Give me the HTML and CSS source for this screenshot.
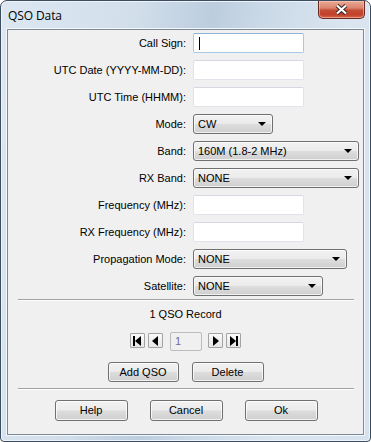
FILE: index.html
```html
<!DOCTYPE html>
<html>
<head>
<meta charset="utf-8">
<link rel="stylesheet" href="styles.css">
</head>
<body>
<div class="window">
  <div class="titlebar">
    <span class="title">QSO Data</span>
    <div class="close">
      <svg width="13" height="11" viewBox="0 0 13 11">
        <path d="M2 1.5 L11 9.5 M11 1.5 L2 9.5" stroke="#3b2420" stroke-width="4.2" fill="none"/>
        <path d="M2 1.5 L11 9.5 M11 1.5 L2 9.5" stroke="#ffffff" stroke-width="2.2" fill="none"/>
      </svg>
    </div>
  </div>
  <div class="client">
    <div class="form">
      <label>Call Sign:</label>
      <div class="input focused w111"><span class="caret"></span></div>
      <label>UTC Date (YYYY-MM-DD):</label>
      <div class="input w111"></div>
      <label>UTC Time (HHMM):</label>
      <div class="input w111"></div>
      <label>Mode:</label>
      <div class="select w80"><span>CW</span><i class="arrow"></i></div>
      <label>Band:</label>
      <div class="select w166"><span>160M (1.8-2 MHz)</span><i class="arrow"></i></div>
      <label>RX Band:</label>
      <div class="select w166"><span>NONE</span><i class="arrow"></i></div>
      <label>Frequency (MHz):</label>
      <div class="input w111"></div>
      <label>RX Frequency (MHz):</label>
      <div class="input w111"></div>
      <label>Propagation Mode:</label>
      <div class="select w154"><span>NONE</span><i class="arrow"></i></div>
      <label>Satellite:</label>
      <div class="select w130"><span>NONE</span><i class="arrow"></i></div>
    </div>
    <div class="sep"></div>
    <div class="record">1 QSO Record</div>
    <div class="nav">
      <div class="navbtn"><svg width="11" height="10" viewBox="0 0 11 10"><rect x="1" y="0" width="2" height="10" fill="#000"/><path d="M3 5 L9 0 L9 10 Z" fill="#000"/></svg></div>
      <div class="navbtn"><svg width="11" height="10" viewBox="0 0 11 10"><path d="M2 5 L8 0 L8 10 Z" fill="#000"/></svg></div>
      <div class="numbox">1</div>
      <div class="navbtn"><svg width="11" height="10" viewBox="0 0 11 10"><path d="M9 5 L3 0 L3 10 Z" fill="#000"/></svg></div>
      <div class="navbtn"><svg width="11" height="10" viewBox="0 0 11 10"><rect x="8" y="0" width="2" height="10" fill="#000"/><path d="M8 5 L2 0 L2 10 Z" fill="#000"/></svg></div>
    </div>
    <div class="actions">
      <button class="btn w71">Add QSO</button>
      <button class="btn w72">Delete</button>
    </div>
    <div class="sep sep2"></div>
    <div class="footer">
      <button class="btn big">Help</button>
      <button class="btn big">Cancel</button>
      <button class="btn big">Ok</button>
    </div>
  </div>
</div>
</body>
</html>
```
FILE: styles.css
```css
html, body {
  margin: 0;
  padding: 0;
  background: #ffffff;
}
body {
  width: 371px;
  height: 442px;
  overflow: hidden;
  font-family: "Liberation Sans", Arial, sans-serif;
  font-size: 11px;
  color: #000;
}
.window {
  box-sizing: border-box;
  width: 371px;
  height: 442px;
  border: 1px solid #3d4d60;
  border-radius: 7px 7px 4px 4px;
  background: linear-gradient(100deg, #dce7f2 0%, #d2dfeb 30%, #bccdde 48%, #c9d8e6 58%, #dae5f0 78%, #d6e2ee 100%);
  box-shadow: inset 0 0 0 1px #eef4fa;
  padding: 0 6px 6px 6px;
  display: flex;
  flex-direction: column;
}
.titlebar {
  height: 28px;
  display: flex;
  justify-content: space-between;
  align-items: flex-start;
}
.title {
  font-family: "Open Sans", "Noto Sans", sans-serif;
  font-size: 12px;
  color: #000;
  margin-top: 6px;
  margin-left: 1px;
  letter-spacing: -0.1px;
}
.close {
  width: 47px;
  height: 18px;
  margin-right: -1px;
  box-sizing: border-box;
  border: 1px solid #6a2a22;
  border-top: none;
  border-radius: 0 0 5px 5px;
  background: linear-gradient(180deg, #eaa996 0%, #dc8670 40%, #c54c34 55%, #c0412a 80%, #d8664a 100%);
  box-shadow: inset 0 0 0 1px rgba(255,220,210,0.45);
  display: flex;
  align-items: center;
  justify-content: center;
}
.close svg { display: block; }
.client {
  flex: 1;
  background: #f0f0f0;
  border: 1px solid #7d8997;
  box-shadow: 0 0 0 1px #f4f8fc;
  padding: 3px 0 0 0;
  display: flex;
  flex-direction: column;
}
.form {
  display: grid;
  grid-template-columns: 178px auto;
  column-gap: 7px;
  row-gap: 7px;
  align-items: center;
  justify-items: start;
}
.form label {
  justify-self: end;
  line-height: 13px;
  white-space: nowrap;
}
.input {
  box-sizing: border-box;
  height: 20px;
  background: #fff;
  border: 1px solid #e2e3ea;
  border-top-color: #d5d8df;
  border-radius: 2px;
  position: relative;
}
.input.focused {
  border: 1px solid #a9c8e6;
  border-top-color: #8db2d8;
}
.caret {
  position: absolute;
  left: 5px;
  top: 3px;
  width: 1px;
  height: 13px;
  background: #000;
}
.w111 { width: 111px; }
.w80 { width: 80px; }
.w166 { width: 166px; }
.w154 { width: 154px; }
.w130 { width: 130px; }
.w71 { width: 71px; }
.w72 { width: 72px; }
.select {
  box-sizing: border-box;
  height: 20px;
  border: 1px solid #707070;
  border-radius: 3px;
  background: linear-gradient(180deg, #f2f2f2 0%, #ebebeb 48%, #dddddd 52%, #cfcfcf 100%);
  box-shadow: inset 0 0 0 1px rgba(255,255,255,0.7);
  display: flex;
  align-items: center;
  justify-content: space-between;
  padding: 0 6px 0 4px;
}
.select span {
  line-height: 13px;
  padding-top: 1px;
}
.arrow {
  width: 0;
  height: 0;
  border-left: 4px solid transparent;
  border-right: 4px solid transparent;
  border-top: 4px solid #000;
}
.sep {
  height: 0;
  border-top: 1px solid #a0a0a0;
  border-bottom: 1px solid #ffffff;
  margin: 3px 9px 0 10px;
}
.record {
  text-align: center;
  line-height: 13px;
  margin-top: 7px;
}
.nav {
  display: flex;
  justify-content: center;
  align-items: flex-start;
  margin-top: 11px;
  height: 19px;
}
.navbtn {
  box-sizing: border-box;
  width: 15px;
  height: 15px;
  margin-top: 1px;
  border: 1px solid #a3a3a3;
  border-radius: 1px;
  background: linear-gradient(180deg, #fafafa, #e6e6e6);
  display: flex;
  align-items: center;
  justify-content: center;
}
.navbtn svg { display: block; }
.navbtn:nth-child(2) { margin-left: 3px; }
.navbtn:nth-child(5) { margin-left: 3px; }
.numbox {
  box-sizing: border-box;
  width: 32px;
  height: 19px;
  margin: 0 6px 0 7px;
  border: 1px solid #bcbcbc;
  border-radius: 2px;
  background: #f0f0f0;
  color: #6d6d9a;
  line-height: 17px;
  padding-left: 4px;
}
.actions {
  display: flex;
  justify-content: center;
  gap: 13px;
  margin-top: 11px;
}
.btn {
  box-sizing: border-box;
  height: 20px;
  border: 1px solid #707070;
  border-radius: 3px;
  background: linear-gradient(180deg, #f2f2f2 0%, #ebebeb 48%, #dddddd 52%, #cfcfcf 100%);
  box-shadow: inset 0 0 0 1px rgba(255,255,255,0.75);
  font-family: "Liberation Sans", Arial, sans-serif;
  font-size: 11px;
  color: #000;
  padding: 0;
  line-height: 17px;
}
.sep2 {
  margin-top: 6px;
}
.footer {
  display: flex;
  justify-content: center;
  gap: 22px;
  margin-top: 10px;
  padding-left: 1px;
}
.btn.big {
  width: 73px;
  height: 21px;
}
```
